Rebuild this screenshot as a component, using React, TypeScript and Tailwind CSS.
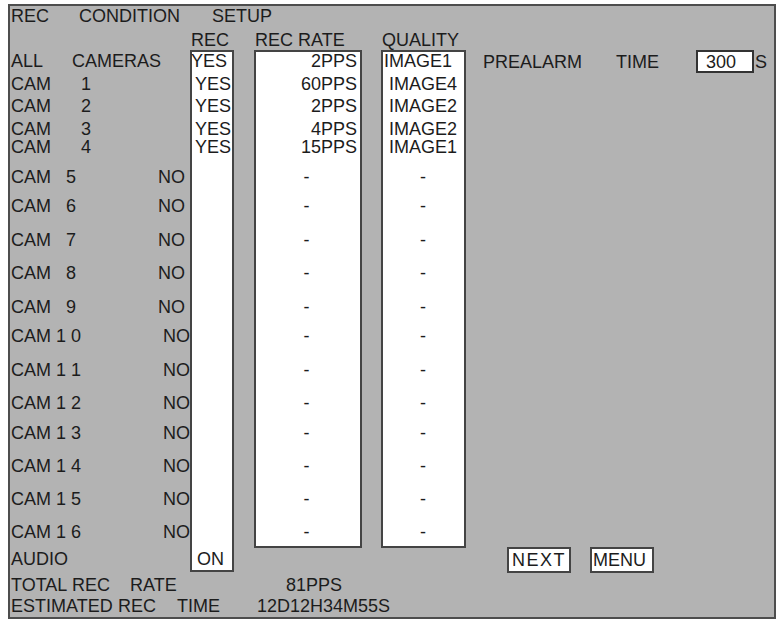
import React from "react";

type Row = {
  h: number;
  kind: "all" | "cam" | "audio";
  cam?: number;
  rec?: string;
  rate?: string;
  q?: string;
};

// row heights = distance between text centres in the reference
const ROWS: Row[] = [
  { h: 23, kind: "all", rec: "YES", rate: "2PPS", q: "IMAGE1" },
  { h: 22, kind: "cam", cam: 1, rec: "YES", rate: "60PPS", q: "IMAGE4" },
  { h: 23, kind: "cam", cam: 2, rec: "YES", rate: "2PPS", q: "IMAGE2" },
  { h: 18, kind: "cam", cam: 3, rec: "YES", rate: "4PPS", q: "IMAGE2" },
  { h: 30, kind: "cam", cam: 4, rec: "YES", rate: "15PPS", q: "IMAGE1" },
  { h: 29, kind: "cam", cam: 5 },
  { h: 34, kind: "cam", cam: 6 },
  { h: 33, kind: "cam", cam: 7 },
  { h: 34, kind: "cam", cam: 8 },
  { h: 29, kind: "cam", cam: 9 },
  { h: 34, kind: "cam", cam: 10 },
  { h: 33, kind: "cam", cam: 11 },
  { h: 30, kind: "cam", cam: 12 },
  { h: 33, kind: "cam", cam: 13 },
  { h: 33, kind: "cam", cam: 14 },
  { h: 33, kind: "cam", cam: 15 },
  { h: 27, kind: "cam", cam: 16 },
  { h: 18, kind: "audio", rec: "ON" },
];

function Label({ row }: { row: Row }) {
  if (row.kind === "all") {
    return (
      <div className="flex">
        <span className="w-[61px]">ALL</span>
        <span>CAMERAS</span>
      </div>
    );
  }
  if (row.kind === "audio") return <div>AUDIO</div>;
  const n = row.cam ?? 0;
  if (n <= 4) {
    return (
      <div className="flex">
        <span className="w-[70px]">CAM</span>
        <span>{n}</span>
      </div>
    );
  }
  if (n <= 9) {
    return (
      <div className="flex">
        <span className="w-[55px]">CAM</span>
        <span>{n}</span>
        <span className="ml-auto pr-[5px]">NO</span>
      </div>
    );
  }
  return (
    <div className="flex">
      <span>CAM {String(n).split("").join(" ")}</span>
      <span className="ml-auto">NO</span>
    </div>
  );
}

export default function App() {
  const font = { fontFamily: '"Liberation Sans", Arial, sans-serif' };
  const camRows = ROWS.filter((r) => r.kind !== "audio");

  return (
    <div className="w-[779px] h-[620px] bg-white pl-[8px] pt-[4px] overflow-hidden" style={font}>
      <div className="w-[768px] h-[615px] border-2 border-[#4d4d4d] bg-[#b3b3b3] text-[18px] leading-[18px] text-[#1c1c1c]">
        {/* Title */}
        <div className="flex pl-[1px] pt-[1px] h-[19px]">
          <span className="w-[68px]">REC</span>
          <span className="w-[133px]">CONDITION</span>
          <span>SETUP</span>
        </div>

        {/* Columns */}
        <div className="flex mt-[6px] h-[541px]">
          {/* labels */}
          <div className="w-[180px] pl-[1px] pt-[21px] flex flex-col">
            {ROWS.map((r, i) => (
              <div key={i} style={{ height: r.h }} className="pt-[1px] leading-[16px]">
                <Label row={r} />
              </div>
            ))}
          </div>

          {/* REC */}
          <div className="w-[44px] flex flex-col">
            <div className="h-[19px] pl-[1px]">REC</div>
            <div className="h-[522px] border-2 border-[#444] bg-white">
              {ROWS.map((r, i) => (
                <div
                  key={i}
                  style={{ height: r.h }}
                  className={
                    "pt-[1px] leading-[16px] " +
                    (r.kind === "all" ? "-ml-[1px]" : r.kind === "audio" ? "pl-[5px]" : "pl-[3px]")
                  }
                >
                  {r.rec ?? ""}
                </div>
              ))}
            </div>
          </div>

          {/* REC RATE */}
          <div className="w-[108px] ml-[20px] flex flex-col">
            <div className="h-[19px] pl-[1px]">REC RATE</div>
            <div className="h-[498px] border-2 border-[#444] bg-white overflow-hidden">
              {camRows.map((r, i) => (
                <div
                  key={i}
                  style={{ height: r.h }}
                  className={
                    "pt-[1px] leading-[16px] pr-[3px] " + (r.rate ? "text-right" : "text-center")
                  }
                >
                  {r.rate ?? "-"}
                </div>
              ))}
            </div>
          </div>

          {/* QUALITY */}
          <div className="w-[85px] ml-[19px] flex flex-col">
            <div className="h-[19px] pl-[1px]">QUALITY</div>
            <div className="h-[498px] border-2 border-[#444] bg-white overflow-hidden">
              {camRows.map((r, i) => (
                <div
                  key={i}
                  style={{ height: r.h }}
                  className={
                    "pt-[1px] leading-[16px] " + (r.kind === "all" ? "pl-[1px]" : "text-center pr-[1px]")
                  }
                >
                  {r.q ?? "-"}
                </div>
              ))}
            </div>
          </div>

          {/* right side */}
          <div className="flex flex-col pt-[19px]">
            <div className="flex items-center h-[23px]">
              <span className="ml-[17px]">PREALARM</span>
              <span className="ml-[34px]">TIME</span>
              <div className="ml-[37px] w-[58px] h-[23px] border-2 border-[#333] bg-white pl-[8px] flex items-center">
                300
              </div>
              <span className="ml-[1px]">S</span>
            </div>
            <div className="flex mt-[474px]">
              <div className="ml-[41px] w-[64px] h-[26px] border-2 border-[#444] bg-white pl-[3px] leading-[22px] tracking-[1.5px]">
                NEXT
              </div>
              <div className="ml-[19px] w-[64px] h-[26px] border-2 border-[#444] bg-white pl-[1px] leading-[22px]">
                MENU
              </div>
            </div>
          </div>
        </div>

        {/* totals */}
        <div className="flex pl-[1px] mt-[4px] h-[18px]">
          <span className="w-[61px]">TOTAL</span>
          <span className="w-[58px]">REC</span>
          <span className="w-[156px]">RATE</span>
          <span>81PPS</span>
        </div>
        <div className="flex pl-[1px] mt-[3px] h-[18px]">
          <span className="w-[107px]">ESTIMATED</span>
          <span className="w-[59px]">REC</span>
          <span className="w-[80px]">TIME</span>
          <span>12D12H34M55S</span>
        </div>
      </div>
    </div>
  );
}
